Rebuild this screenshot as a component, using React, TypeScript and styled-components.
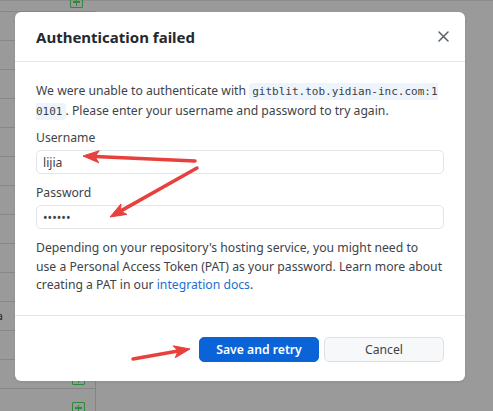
import React from 'react';
import styled, { createGlobalStyle } from 'styled-components';

const GlobalStyle = createGlobalStyle`
  html, body {
    margin: 0;
    padding: 0;
    width: 493px;
    height: 411px;
    overflow: hidden;
    background: #9a9a9a;
    font-family: 'Noto Sans', 'Open Sans', sans-serif;
  }
`;

const Page = styled.div`
  position: relative;
  width: 493px;
  height: 411px;
  display: flex;
  flex-direction: column;
  background: #9a9a9a;
`;

const TopBar = styled.div`
  display: flex;
  height: 6px;
  border-bottom: 1px solid #8c8c8c;
`;

const TopSpacer = styled.div`
  width: 96px;
`;

const BlueTab = styled.div<{ $w: number }>`
  width: ${p => p.$w}px;
  background: #1c4f92;
  border-right: 1px solid #16407a;
`;

const GreenStrip = styled.div`
  flex: 1;
  background: #8a9a8a;
`;

const Body = styled.div`
  flex: 1;
  display: flex;
`;

const LeftColumn = styled.div`
  width: 95px;
  border-right: 1px solid #858585;
  display: flex;
  flex-direction: column;
  margin-top: 10px;
`;

const Row = styled.div`
  height: 28px;
  border-top: 1px solid #878787;
  display: flex;
  align-items: flex-end;
  justify-content: flex-end;
  padding-right: 10px;
  font-size: 11px;
  color: #222;
`;

const PlusBox = styled.div`
  width: 11px;
  height: 10px;
  border: 1.5px solid #2e8a3a;
  border-radius: 1px;
  position: relative;
  margin-bottom: 3px;
  &::before, &::after {
    content: '';
    position: absolute;
    background: #2e8a3a;
  }
  &::before { left: 2px; right: 2px; top: 4.2px; height: 1.6px; }
  &::after { top: 1.5px; bottom: 1.5px; left: 4.7px; width: 1.6px; }
`;

const TopPlus = styled(PlusBox)`
  position: absolute;
  left: 70px;
  top: -4px;
`;

const EdgeText = styled.span`
  margin-right: 82px;
  margin-bottom: 7px;
`;

const Modal = styled.div`
  position: absolute;
  left: 15px;
  top: 12px;
  width: 450px;
  height: 369px;
  background: #fff;
  border-radius: 6px;
  display: flex;
  flex-direction: column;
  box-shadow: 0 1px 3px rgba(0, 0, 0, 0.08);
`;

const Header = styled.div`
  height: 49px;
  border-bottom: 1px solid #e3e5e8;
  display: flex;
  align-items: center;
  justify-content: space-between;
  padding: 0 13px 0 21px;
`;

const Title = styled.h2`
  margin: 0;
  font-size: 15px;
  font-weight: 700;
  color: #24292f;
`;

const CloseButton = styled.button`
  border: none;
  background: transparent;
  padding: 0;
  width: 18px;
  height: 18px;
  display: flex;
  align-items: center;
  justify-content: center;
  cursor: pointer;
`;

const Content = styled.div`
  flex: 1;
  padding: 20px 21px 0 21px;
  color: #3d4349;
  font-size: 12.2px;
  line-height: 18.5px;
`;

const Text = styled.p`
  margin: 0;
`;

const Code = styled.code`
  font-family: 'DejaVu Sans Mono', monospace;
  font-size: 11px;
  background: #eef4fb;
  border-radius: 4px;
  padding: 2px 3px;
  color: #3b4046;
  word-break: break-all;
`;

const Field = styled.div<{ $gap: number }>`
  display: flex;
  flex-direction: column;
  margin-top: ${p => p.$gap}px;
`;

const Label = styled.label`
  font-size: 12.2px;
  color: #3d4349;
  line-height: 18px;
  margin-bottom: 3px;
`;

const Input = styled.input`
  height: 24px;
  box-sizing: border-box;
  border: 1px solid #e1e4e8;
  border-radius: 5px;
  padding: 0 6px;
  font-family: inherit;
  font-size: 12.2px;
  color: #3d4349;
  outline: none;
  background: #fff;
`;

const Hint = styled.p`
  margin: 10px 0 0 0;
`;

const Link = styled.a`
  color: #1b6fd1;
  text-decoration: none;
`;

const Footer = styled.div`
  height: 66px;
  border-top: 1px solid #e3e5e8;
  display: flex;
  align-items: center;
  justify-content: flex-end;
  gap: 5px;
  padding: 0 21px 0 0;
  box-sizing: border-box;
`;

const Button = styled.button<{ $primary?: boolean }>`
  width: 120px;
  height: 25px;
  border-radius: 5px;
  font-family: inherit;
  font-size: 12.2px;
  font-weight: ${p => (p.$primary ? 600 : 400)};
  color: ${p => (p.$primary ? '#fff' : '#3d4349')};
  background: ${p => (p.$primary ? '#0a64d8' : '#f6f8fa')};
  border: 1px solid ${p => (p.$primary ? '#0a64d8' : '#dde1e6')};
  cursor: pointer;
  margin-top: 2px;
`;

const Arrows = styled.svg`
  position: absolute;
  left: 0;
  top: 0;
  width: 493px;
  height: 411px;
  pointer-events: none;
`;

const Arrow: React.FC<{ x1: number; y1: number; x2: number; y2: number }> = ({ x1, y1, x2, y2 }) => {
  const dx = x2 - x1;
  const dy = y2 - y1;
  const len = Math.hypot(dx, dy);
  const ux = dx / len;
  const uy = dy / len;
  const head = 16;
  const half = 6;
  const bx = x2 - ux * head;
  const by = y2 - uy * head;
  const px = -uy;
  const py = ux;
  const pts = [
    `${x2},${y2}`,
    `${bx + px * half},${by + py * half}`,
    `${bx + ux * 4},${by + uy * 4}`,
    `${bx - px * half},${by - py * half}`,
  ].join(' ');
  return (
    <g fill="#e8403c" stroke="#e8403c">
      <line x1={x1} y1={y1} x2={bx + ux * 4} y2={by + uy * 4} strokeWidth={3.5} strokeLinecap="round" />
      <polygon points={pts} strokeWidth={1} strokeLinejoin="round" />
    </g>
  );
};

const rows = Array.from({ length: 14 }, (_, i) => i);

const App: React.FC = () => {
  return (
    <>
      <GlobalStyle />
      <Page>
        <TopBar>
          <TopSpacer />
          <BlueTab $w={34} />
          <BlueTab $w={35} />
          <GreenStrip />
        </TopBar>
        <Body>
          <LeftColumn>
            {rows.map(i => (
              <Row key={i}>
                {(i === 12 || i === 13) && <PlusBox />}
                {i === 10 && <EdgeText>a</EdgeText>}
              </Row>
            ))}
          </LeftColumn>
        </Body>
        <TopPlus />

        <Modal>
          <Header>
            <Title>Authentication failed</Title>
            <CloseButton aria-label="Close">
              <svg width="11" height="11" viewBox="0 0 11 11">
                <path d="M1 1L10 10M10 1L1 10" stroke="#5b6168" strokeWidth="1.5" strokeLinecap="round" />
              </svg>
            </CloseButton>
          </Header>
          <Content>
            <Text>
              We were unable to authenticate with <Code>gitblit.tob.yidian-inc.com:10101</Code>. Please enter your
              username and password to try again.
            </Text>
            <Field $gap={8}>
              <Label>Username</Label>
              <Input defaultValue="lijia" />
            </Field>
            <Field $gap={10}>
              <Label>Password</Label>
              <Input type="password" defaultValue="123456" />
            </Field>
            <Hint>
              Depending on your repository's hosting service, you might need to
              <br />
              use a Personal Access Token (PAT) as your password. Learn more about creating a PAT in our{' '}
              <Link href="#">integration docs</Link>.
            </Hint>
          </Content>
          <Footer>
            <Button $primary>Save and retry</Button>
            <Button>Cancel</Button>
          </Footer>
        </Modal>

        <Arrows viewBox="0 0 493 411">
          <Arrow x1={195} y1={161} x2={83} y2={156} />
          <Arrow x1={197} y1={168} x2={110} y2={217} />
          <Arrow x1={133} y1={359} x2={190} y2={349} />
        </Arrows>
      </Page>
    </>
  );
};

export default App;
